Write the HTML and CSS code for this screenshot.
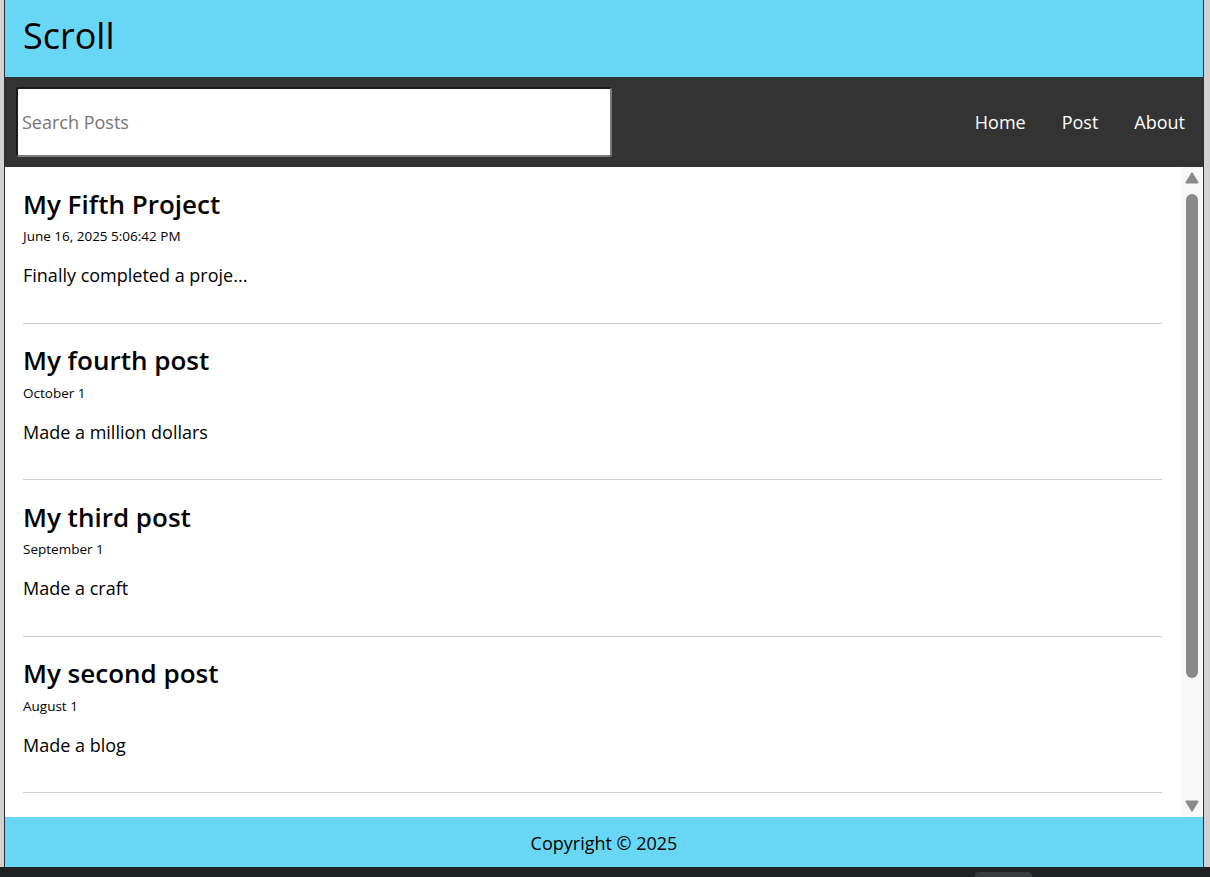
FILE: index.html
```html
<!DOCTYPE html>
<html lang="en">
<head>
<meta charset="utf-8">
<title>Scroll</title>
<link rel="stylesheet" href="styles.css">
</head>
<body>
<div class="window">
  <header class="site-header">
    <h1 class="brand">Scroll</h1>
  </header>
  <nav class="topnav">
    <input class="search" type="text" placeholder="Search Posts">
    <ul class="links">
      <li><a href="#">Home</a></li>
      <li><a href="#">Post</a></li>
      <li><a href="#">About</a></li>
    </ul>
  </nav>
  <div class="content">
    <main class="posts">
      <article class="post">
        <h2 class="post-title">My Fifth Project</h2>
        <p class="post-date">June 16, 2025 5:06:42 PM</p>
        <p class="post-body">Finally completed a proje...</p>
      </article>
      <article class="post">
        <h2 class="post-title">My fourth post</h2>
        <p class="post-date">October 1</p>
        <p class="post-body">Made a million dollars</p>
      </article>
      <article class="post">
        <h2 class="post-title">My third post</h2>
        <p class="post-date">September 1</p>
        <p class="post-body">Made a craft</p>
      </article>
      <article class="post">
        <h2 class="post-title">My second post</h2>
        <p class="post-date">August 1</p>
        <p class="post-body">Made a blog</p>
      </article>
    </main>
    <div class="scrollbar" aria-hidden="true">
      <svg class="sb-arrow" width="14" height="12" viewBox="0 0 14 12"><path d="M7 1.5 L12.5 10.5 H1.5 Z" fill="#8a8a8a" stroke="#8a8a8a" stroke-width="2" stroke-linejoin="round"/></svg>
      <div class="sb-thumb"></div>
      <svg class="sb-arrow sb-down" width="14" height="12" viewBox="0 0 14 12"><path d="M7 10.5 L12.5 1.5 H1.5 Z" fill="#8a8a8a" stroke="#8a8a8a" stroke-width="2" stroke-linejoin="round"/></svg>
    </div>
  </div>
  <footer class="site-footer">Copyright © 2025</footer>
</div>
<div class="taskbar"><span class="task"></span></div>
</body>
</html>
```

FILE: styles.css
```css
html, body {
  margin: 0;
  padding: 0;
}
body {
  height: 877px;
  overflow: hidden;
  display: flex;
  flex-direction: column;
  background: #d2d2d2;
  font-family: "Open Sans", "DejaVu Sans", sans-serif;
  color: #000;
}
.window {
  flex: 1;
  min-height: 0;
  margin: 0 6px 0 4px;
  border-left: 1px solid #2e2e2e;
  border-right: 1px solid #2e2e2e;
  display: flex;
  flex-direction: column;
  background: #fff;
}
.site-header {
  height: 77px;
  box-sizing: border-box;
  flex: none;
  background: #67d7f5;
  display: flex;
  align-items: center;
  padding: 0 0 6px 18px;
}
.brand {
  margin: 0;
  font-size: 36px;
  font-weight: 400;
  line-height: 1;
}
.topnav {
  height: 90px;
  flex: none;
  background: #333333;
  display: flex;
  align-items: center;
  justify-content: space-between;
  padding-left: 11px;
}
.search {
  width: 596px;
  height: 70px;
  box-sizing: border-box;
  margin: 0;
  border: 2px solid;
  border-color: #1a1a1a #7a7a7a #7a7a7a #1a1a1a;
  border-radius: 3px;
  padding: 0 4px;
  background: #fff;
  font-family: "Open Sans", sans-serif;
  font-size: 18px;
  color: #000;
  outline: none;
}
.search::placeholder {
  color: #767676;
}
.links {
  list-style: none;
  margin: 0;
  padding: 0;
  display: flex;
}
.links a {
  display: block;
  padding: 0 18px;
  color: #fff;
  text-decoration: none;
  font-size: 18px;
}
.content {
  flex: 1;
  min-height: 0;
  display: flex;
  position: relative;
}
.posts {
  flex: 1;
  min-width: 0;
  overflow-y: auto;
  scrollbar-width: none;
  padding: 0 41px 0 18px;
}
.scrollbar {
  position: absolute;
  top: 0;
  right: 0;
  bottom: 0;
  width: 21px;
  background: #f9f9f9;
  display: flex;
  flex-direction: column;
  align-items: center;
  padding: 5px 1px 5px 0;
  box-sizing: border-box;
}
.sb-arrow {
  display: block;
  flex: none;
}
.sb-thumb {
  flex: none;
  width: 12px;
  height: 484px;
  margin-top: 10px;
  border-radius: 6px;
  background: #8a8a8a;
}
.sb-down {
  margin-top: auto;
}
.post {
  padding-top: 18.5px;
  border-bottom: 1px solid #cccccc;
}
.post-title {
  margin: 0;
  font-size: 26px;
  font-weight: 600;
  line-height: normal;
}
.post-date {
  margin: 5.5px 0 0;
  font-size: 13.5px;
  line-height: normal;
}
.post-body {
  margin: 18px 0 35.5px;
  font-size: 18px;
  line-height: normal;
}
.site-footer {
  height: 50px;
  box-sizing: border-box;
  padding-top: 1px;
  flex: none;
  background: #67d7f5;
  display: flex;
  align-items: center;
  justify-content: center;
  font-size: 18px;
}
.taskbar {
  height: 10px;
  flex: none;
  background: #202124;
  position: relative;
}
.task {
  position: absolute;
  left: 975px;
  top: 5px;
  width: 57px;
  height: 10px;
  border-radius: 4px;
  background: #3a3b3e;
}
```
